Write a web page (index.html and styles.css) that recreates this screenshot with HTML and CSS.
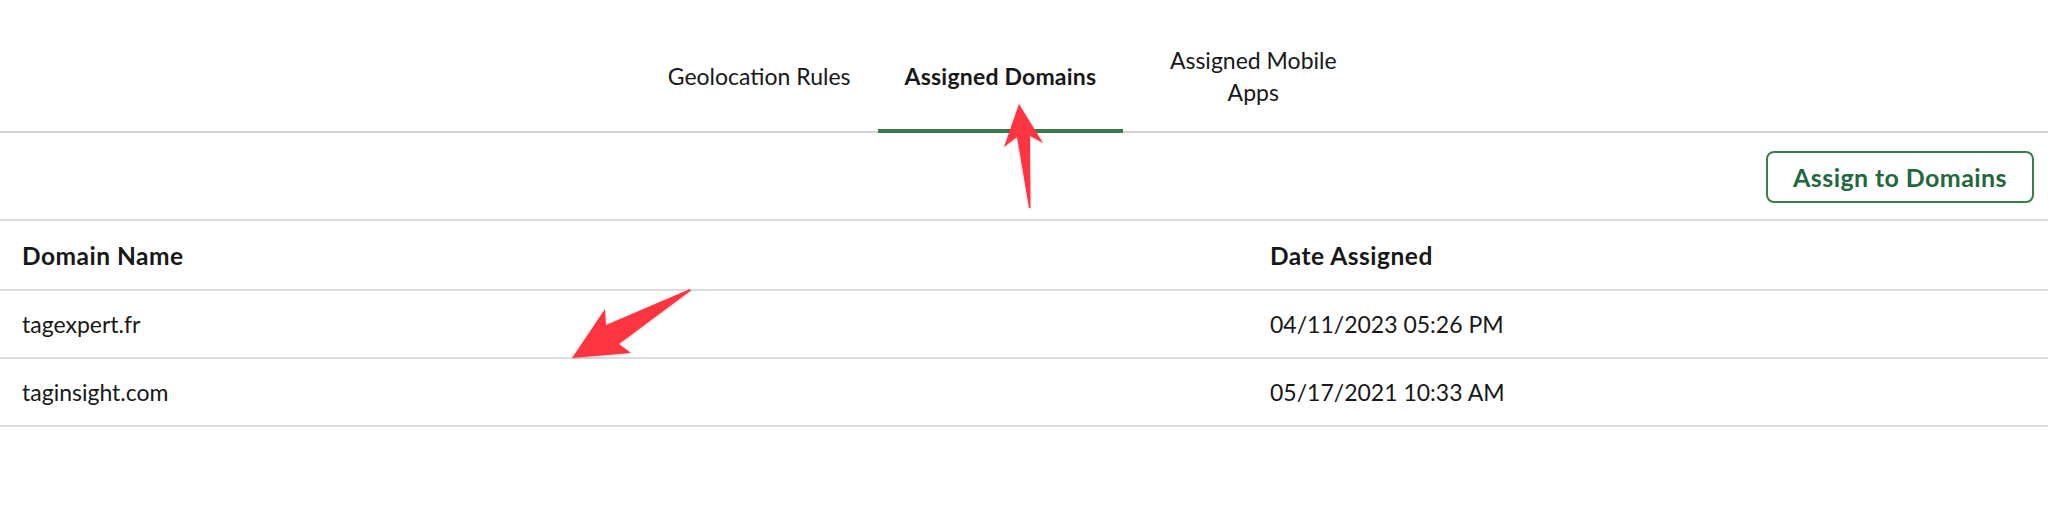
FILE: index.html
```html
<!DOCTYPE html>
<html lang="en">
<head>
  <meta charset="UTF-8">
  <title>Assigned Domains</title>
  <link rel="stylesheet" href="styles.css">
</head>
<body>
  <div class="page">
    <!-- Tab bar -->
    <nav class="tabs">
      <a class="tab">Geolocation Rules</a>
      <a class="tab active">Assigned Domains</a>
      <a class="tab wrap">Assigned Mobile Apps</a>
    </nav>

    <!-- Toolbar -->
    <div class="toolbar">
      <button class="btn-outline">Assign to Domains</button>
    </div>

    <!-- Domains table -->
    <table class="domains">
      <thead>
        <tr>
          <th class="col-name">Domain Name</th>
          <th>Date Assigned</th>
        </tr>
      </thead>
      <tbody>
        <tr>
          <td>tagexpert.fr</td>
          <td>04/11/2023 05:26 PM</td>
        </tr>
        <tr>
          <td>taginsight.com</td>
          <td>05/17/2021 10:33 AM</td>
        </tr>
      </tbody>
    </table>

    <!-- Annotation arrows -->
    <svg class="annotations" width="2048" height="510" viewBox="0 0 2048 510">
      <defs>
        <filter id="shadow" x="-20%" y="-20%" width="140%" height="140%">
          <feDropShadow dx="0" dy="1" stdDeviation="1.2" flood-color="#000" flood-opacity="0.18"/>
        </filter>
      </defs>
      <polygon filter="url(#shadow)" fill="#fc3441"
        points="1019,104 1043,143 1030,136 1030.5,208 1029,208 1017,137 1004,147"/>
      <polygon filter="url(#shadow)" fill="#fc3441"
        points="572,358 605,309 606,325 690,289 691,290.5 619,344 631,353"/>
    </svg>
  </div>
</body>
</html>
```

FILE: styles.css
```css
/* Global */
body {
  margin: 0;
  padding: 0;
  background: #fff;
  color: #181818;
  font-family: Lato, "Open Sans", sans-serif;
  font-size: 23px;
}

.page {
  position: relative;
  width: 2048px;
  height: 510px;
  overflow: hidden;
}

/* Tabs */
.tabs {
  display: flex;
  justify-content: center;
  height: 109px;
  padding: 22px 24px 0 0;
  border-bottom: 2px solid #d4d4d4;
}

.tab {
  display: flex;
  align-items: center;
  justify-content: center;
  padding: 0 27px;
  margin-bottom: -2px;
  border-bottom: 4px solid transparent;
  line-height: 32px;
  text-align: center;
  color: #181818;
}

.tab.active {
  font-weight: 700;
  letter-spacing: 0.2px;
  border-bottom-color: #3b7a4b;
}

.tab.wrap {
  width: 206px;
}

/* Toolbar */
.toolbar {
  display: flex;
  justify-content: flex-end;
  padding: 18px 14px 16px 0;
  border-bottom: 2px solid #dcdcdc;
}

.btn-outline {
  height: 52px;
  width: 268px;
  background: #fff;
  border: 2px solid #3b7d4a;
  border-radius: 8px;
  color: #22683e;
  font-family: inherit;
  font-size: 25px;
  font-weight: 700;
  letter-spacing: 0.4px;
  cursor: pointer;
}

/* Table */
.domains {
  width: 100%;
  border-collapse: collapse;
}

.domains th,
.domains td {
  text-align: left;
  padding: 0 0 0 22px;
  border-bottom: 2px solid #dcdcdc;
}

.domains th {
  height: 68px;
  font-size: 24.5px;
  font-weight: 700;
  letter-spacing: 0.5px;
}

.domains td {
  height: 66px;
  font-weight: 400;
}

.col-name {
  width: 1226px;
}

/* Annotations */
.annotations {
  position: absolute;
  top: 0;
  left: 0;
  pointer-events: none;
}
```
